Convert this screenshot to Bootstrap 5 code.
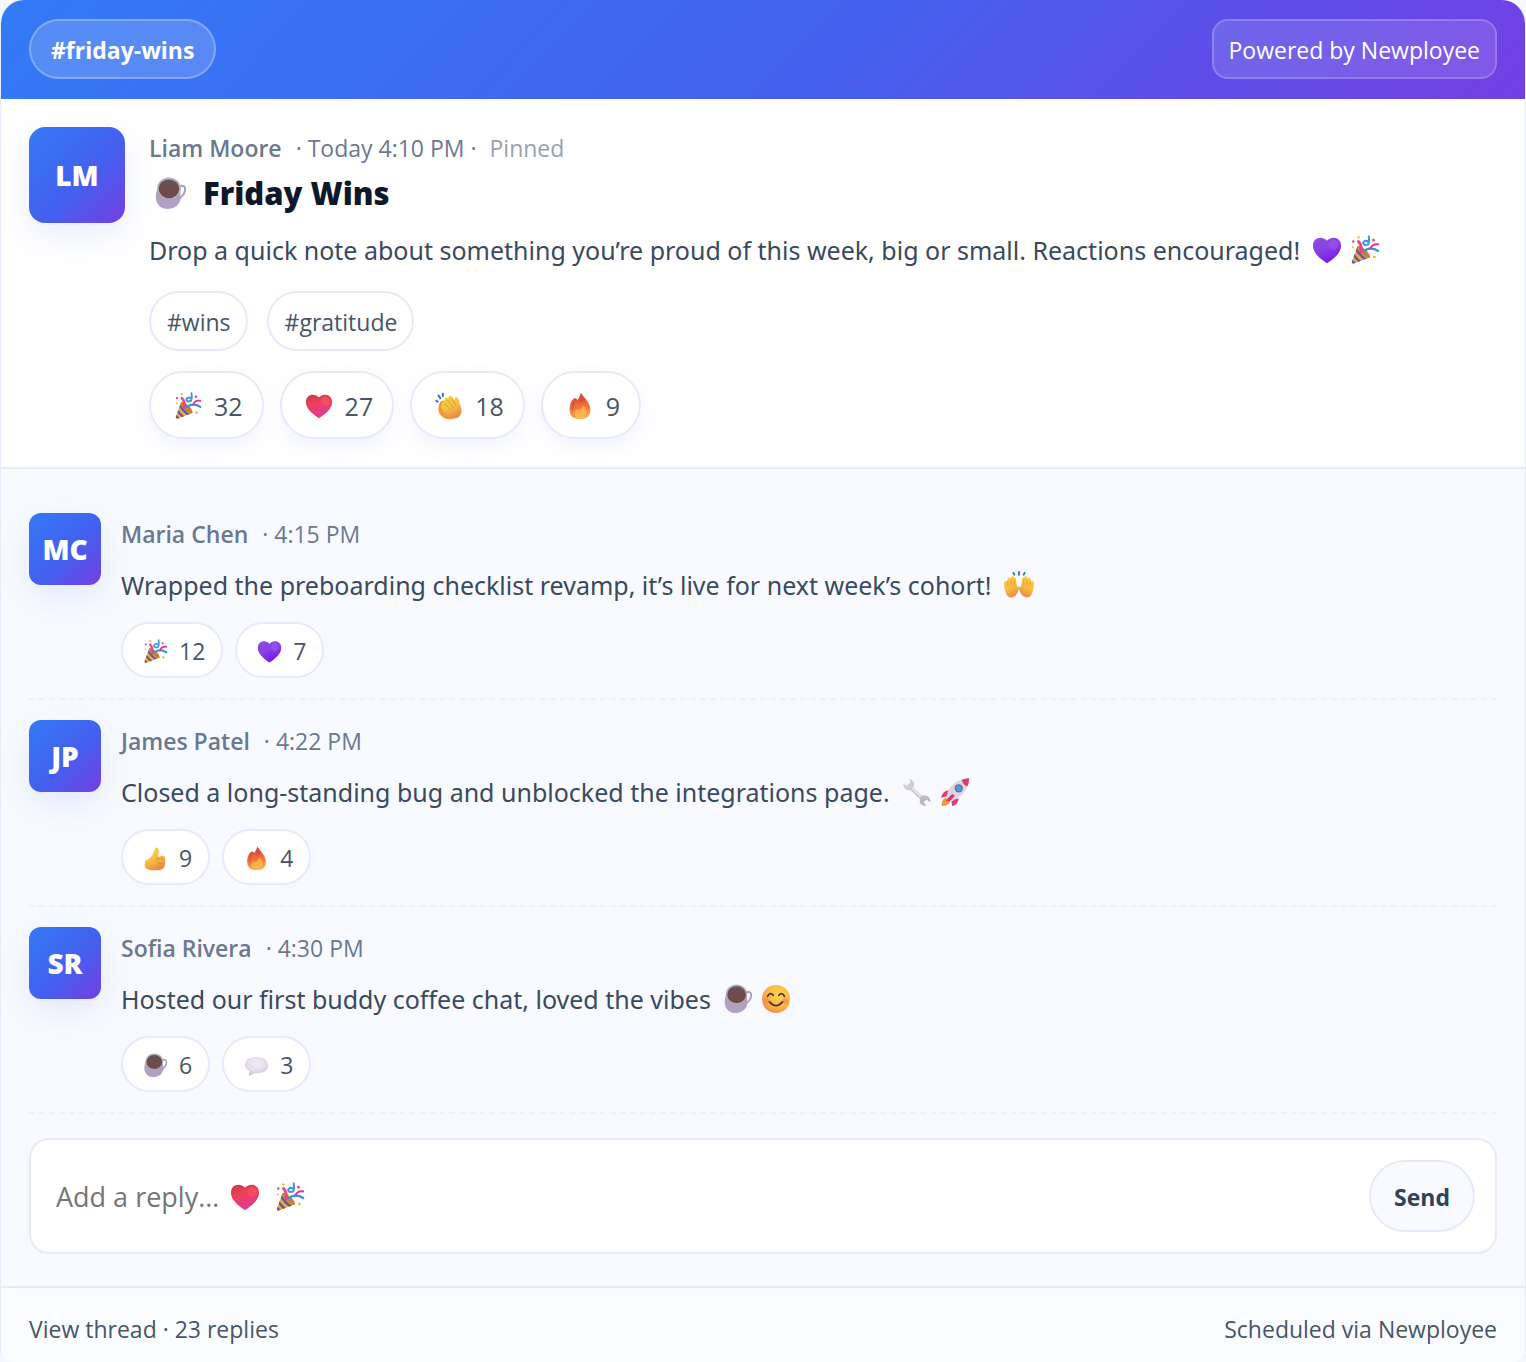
<!DOCTYPE html>
<html lang="en">
<head>
<meta charset="utf-8">
<meta name="viewport" content="width=device-width, initial-scale=1">
<title>#friday-wins</title>
<link href="https://cdn.jsdelivr.net/npm/bootstrap@5.3.0/dist/css/bootstrap.min.css" rel="stylesheet">
<style>
:root { --line: #e8eafc; --brand: linear-gradient(135deg, #347af6 0%, #4360ef 55%, #743fe3 100%); }
body { font-family: "Open Sans", "Noto Sans", sans-serif; background: #f6f8ff; color: #334155; font-size: 25px; line-height: 44px; }
.channel { border: 1px solid var(--line); border-width: 0 1px; border-radius: 24px 24px 12px 12px; background: #fff; overflow: hidden; }
.channel-top { background: var(--brand); padding: 19px 28px 20px; color: #fff; }
.channel-name, .powered { height: 60px; border: 2px solid rgba(255,255,255,.26); background: rgba(255,255,255,.16); color: #fff; font-size: 23px; }
.channel-name { font-weight: 700; padding: 2px 20px 0; border-radius: 30px; }
.powered { padding: 2px 15px 0; border-radius: 16px; background: rgba(255,255,255,.12); border-color: rgba(255,255,255,.2); }
.initials { flex: none; width: 72px; height: 72px; border-radius: 12px; background: var(--brand); color: #fff; font-weight: 800; font-size: 28px; box-shadow: 0 12px 32px rgba(67,97,238,.11); }
.initials-lg { width: 96px; height: 96px; border-radius: 16px; }
.post { padding: 28px; gap: 24px; border-bottom: 2px solid var(--line); }
.meta { font-size: 23px; line-height: 42px; padding-bottom: 2px; color: #6b7891; white-space: pre-wrap; }
.meta strong { font-weight: 600; margin-right: 14px; }
.pinned { color: #9aa1ad; margin-left: 13px; }
.post-title { font-size: 31px; line-height: 44px; font-weight: 800; color: #0f172a; padding-left: 5px; gap: 16px; }
.post-text { margin: 13px 0 19px; }
.post-text, .reply-text { font-family: "Noto Sans", "Open Sans", sans-serif; color: #3b4960; }
.glyph { width: 30px; height: 30px; flex: none; }
.glyph-title { width: 33px; height: 33px; }
.glyphs { gap: 8px; margin-left: 12px; }
.tags { gap: 19px; margin-bottom: 20px; }
.tag { height: 60px; border: 2px solid var(--line); border-radius: 30px; padding: 2px 15px 0 16px; font-size: 23px; color: #475569; text-decoration: none; }
.react { height: 68px; border: 2px solid var(--line); border-radius: 34px; background: #fff; color: #475569; font-size: 25px; padding: 1px 19px 0 23px; gap: 12px; box-shadow: 0 8px 20px rgba(67,97,238,.07); }
.react .glyph { width: 28px; height: 28px; }
.reply-reacts { gap: 12px; }
.thread .react { height: 56px; font-size: 23px; padding: 2px 16px 0 20px; gap: 11px; box-shadow: none; }
.thread .react .glyph { width: 25px; height: 25px; }
.thread { background: #f8faff; padding: 24px 28px 32px; border-bottom: 2px solid var(--line); }
.reply { padding: 20px 0; gap: 20px; border-bottom: 2px dashed #f0f2f9; }
.reply-text { margin: 6px 0 15px; }
.composer { margin-top: 24px; height: 116px; border: 2px solid var(--line); border-radius: 20px; background: #fff; padding: 0 20px 0 25px; }
.composer-field { font-size: 27px; color: #334155; border: 0; outline: 0; background: transparent; padding: 0; height: 72px; }
.composer-field::placeholder { color: #757575; opacity: 1; }
.composer-glyphs { position: absolute; left: 174px; top: 22px; gap: 15px; pointer-events: none; }
.composer-field:not(:placeholder-shown) + .composer-glyphs { display: none !important; }
.send { height: 72px; border: 2px solid var(--line); border-radius: 36px; background: #f8faff; color: #334155; font-size: 23px; font-weight: 700; padding: 2px 23px 0; }
.channel-foot { background: #fbfcff; padding: 19px 28px 10px; font-size: 23px; color: #475569; }
.channel-foot a { color: inherit; text-decoration: none; }
</style>
</head>
<body>
<svg width="0" height="0" class="position-absolute" aria-hidden="true">
  <defs>
    <linearGradient id="gRed" x1="0" y1="0" x2="0.3" y2="1"><stop offset="0" stop-color="#c8394c"/><stop offset=".45" stop-color="#ee4158"/><stop offset="1" stop-color="#e2389c"/></linearGradient>
    <linearGradient id="gPurple" x1="0" y1="0" x2="0.5" y2="1"><stop offset="0" stop-color="#8a50dc"/><stop offset=".5" stop-color="#8840e4"/><stop offset="1" stop-color="#7a18f0"/></linearGradient>
    <linearGradient id="gHand" x1="0" y1="0" x2=".4" y2="1"><stop offset="0" stop-color="#ffcf45"/><stop offset=".6" stop-color="#f9c03e"/><stop offset="1" stop-color="#ec8f4a"/></linearGradient>
    <linearGradient id="gFlame" x1=".5" y1="0" x2=".6" y2="1"><stop offset="0" stop-color="#d8443c"/><stop offset=".5" stop-color="#f0713a"/><stop offset="1" stop-color="#ffb348"/></linearGradient>
    <linearGradient id="gMug" x1="0" y1="0" x2="0" y2="1"><stop offset="0" stop-color="#a9a0b4"/><stop offset="1" stop-color="#b3a2c6"/></linearGradient>
    <radialGradient id="gFace" cx=".6" cy=".35" r=".75"><stop offset="0" stop-color="#ffd84e"/><stop offset=".6" stop-color="#fbb442"/><stop offset="1" stop-color="#ee8550"/></radialGradient>
    <radialGradient id="gBubble" cx=".5" cy=".35" r=".7"><stop offset="0" stop-color="#f1edf6"/><stop offset=".6" stop-color="#e2dcea"/><stop offset="1" stop-color="#c3b5d6"/></radialGradient>
    <linearGradient id="gSteel" x1="0" y1="0" x2="1" y2="1"><stop offset="0" stop-color="#d9d6e0"/><stop offset="1" stop-color="#b5afc0"/></linearGradient>
    <clipPath id="coneClip"><path d="M8 12 L21 24 L4 30.500 Q1.500 31 2 28.500Z"/></clipPath>
  </defs>
  <symbol id="party" viewBox="0 0 32 32">
    <path d="M8 12 L21 24 L4 30.500 Q1.500 31 2 28.500Z" fill="#f4a63c"/>
    <g clip-path="url(#coneClip)" stroke="#5b5aa8" stroke-width="2.600" fill="none"><path d="M5 12 Q9 22 20 28"/><path d="M2 18 Q6 26 14 31"/><path d="M0 25 Q3 29 8 33"/></g>
    <ellipse cx="14.500" cy="18" rx="9" ry="3" transform="rotate(43 14.500 18)" fill="#c98035"/>
    <path d="M12 18 Q13 11 9 7" stroke="#e8438f" stroke-width="3" fill="none" stroke-linecap="round"/>
    <path d="M15 17 Q22 12 30 17" stroke="#3f8fdc" stroke-width="2.600" fill="none" stroke-linecap="round"/>
    <path d="M20 1.500 Q21 7 19.500 10 Q15 12 14 8.500 Q15 5 19.500 7" stroke="#3f98d8" stroke-width="2.200" fill="none" stroke-linecap="round"/>
    <path d="M22 14 Q24 9 30 10" stroke="#d83a9a" stroke-width="2.200" fill="none" stroke-linecap="round"/>
    <g fill="#e8438f"><circle cx="3.500" cy="7" r="1.300"/><circle cx="25" cy="5.500" r="1.400"/></g>
    <g fill="#f6b53e"><circle cx="9" cy="2.500" r="1.300"/><circle cx="26" cy="23.500" r="1.500"/><circle cx="3" cy="13" r="1"/></g>
  </symbol>
  <symbol id="heart" viewBox="0 0 32 32"><path d="M16 30 C11 27 1 20 1 11.500 C1 6 4.500 3 9 3 C12 3 14.500 4.500 16 6 C17.500 4.500 20 3 23 3 C27.500 3 31 6 31 11.500 C31 20 21 27 16 30Z"/></symbol>
  <symbol id="heart-red" viewBox="0 0 32 32"><use href="#heart" fill="url(#gRed)"/><path d="M18 11 Q20 5 24 5 Q29 7 28 13 Q24 19 18 11Z" fill="#ff6a5e" opacity=".35"/></symbol>
  <symbol id="heart-purple" viewBox="0 0 32 32"><use href="#heart" fill="url(#gPurple)"/><path d="M17 11 Q19 5 24 5 Q29 7 27 14 Q22 19 17 11Z" fill="#a86af0" opacity=".4"/></symbol>
  <symbol id="clap" viewBox="0 0 32 32">
    <path d="M4 17 Q5 10 9 10 L22 10 L28 20 Q27 30 19 31 Q11 32 6 26 Q3 22 4 17Z" fill="#ee9a45"/>
    <path d="M8 15 Q7 12 10 11 L11 8 Q12 5 15 7 L16 5 Q18 3 21 7 L23 10 Q22 5 25 6 Q28 8 28 13 Q31 18 30 24 Q28 31 21 30 Q13 28 8 20 Q6 17 8 15Z" fill="url(#gHand)"/>
    <path d="M11 13 L18 21 M14 9 L21 18 M19 8 L24 15" stroke="#dc9137" stroke-width="1" fill="none" stroke-linecap="round"/>
    <path d="M1.500 10 L3 11 M4 4 L6 7 M9 2 L9 4.500" stroke="#376cc8" stroke-width="2.200" stroke-linecap="round"/>
  </symbol>
  <symbol id="flame" viewBox="0 0 32 32">
    <path d="M5 13 Q7 8 10 7 Q12 7 13 9 Q16 5 17 1 C20 6 28 12 28 20 Q28 31 16 31 Q4 31 4 20 Q4 16 5 13Z" fill="url(#gFlame)"/>
    <path d="M10 7 Q4 14 8 23 Q8 14 13 9 Q12 7 10 7Z" fill="#d75837"/>
    <path d="M17 1 Q20 5 22 9 Q18 12 14 12 Q17 6 17 1Z" fill="#d6483c" opacity=".7"/>
    <path d="M19 15 Q25 19 24 24 Q22 30 16 30 Q9 29 10 24 Q11 19 16 20 Q19 19 19 15Z" fill="#ffc255" opacity=".65"/>
  </symbol>
  <symbol id="coffee" viewBox="0 0 32 32">
    <path d="M24 9 Q31 7 30 13 Q29 19 24 20" fill="none" stroke="#a9a1b3" stroke-width="2"/>
    <path d="M4 9 Q1 17 2 22 Q4 31 14 31 Q24 30 26 21 L25 8Z" fill="url(#gMug)"/>
    <ellipse cx="14.500" cy="11" rx="11.500" ry="10.500" fill="#b5adbd"/><ellipse cx="14.500" cy="11.500" rx="10" ry="9" fill="#704b4b"/>
    <path d="M6 7 Q14 -1 23 7 Q15 4 6 7Z" fill="#5d565f"/>
  </symbol>
  <symbol id="hands" viewBox="0 0 32 32">
    <g id="palm"><path d="M3 27 Q0 21 0 14 Q1 10 3 12 L4 9 Q5 7 7 9 Q8 5 11 8 Q13 8 13 12 L14 18 Q16 16 16 20 Q14 28 9 29 Q5 30 3 27Z" fill="url(#gHand)"/><path d="M4 12 V17 M7.500 10 V16 M11 10 V17" stroke="#e2953a" stroke-width=".8"/></g>
    <use href="#palm" transform="translate(32 0) scale(-1 1)"/>
    <path d="M10 3 L11 5 M16 2 V5 M22 3 L21 5" stroke="#3b70cc" stroke-width="2" stroke-linecap="round"/>
  </symbol>
  <symbol id="wrench" viewBox="0 0 32 32">
    <path d="M8 2 Q13 3 13 8 L12 11 L21 20 Q26 18 29 22 Q31 25 30 27 L26 24 L23 27 L26 31 Q20 31 19 27 L19 23 L9 14 Q4 15 2 11 L1 7 L5 9 L9 6Z" fill="url(#gSteel)"/><path d="M11 12 L20 21" stroke="#edebf2" stroke-width="1.500"/>
  </symbol>
  <symbol id="rocket" viewBox="0 0 32 32">
    <path d="M6 22 Q1 25 2 31 Q8 31 11 26Z" fill="#f49a36"/><path d="M9 14 Q3 15 1 22 L10 20Z M20 23 Q19 30 13 31 L12 24Z" fill="#e53c73"/>
    <path d="M7 21 Q10 4 30 1 Q31 18 12 26Z" fill="#dcd5e3"/><path d="M23 3 L31 1 Q31 7 29 10 Q25 9 23 3Z" fill="#e23a5e"/>
    <circle cx="20" cy="12" r="4.400" fill="#64739c"/><circle cx="20" cy="12" r="2.800" fill="#4e9cec"/><path d="M6 25 L13 18 L16 20 L10 26Z" fill="#d8376c"/>
  </symbol>
  <symbol id="thumb" viewBox="0 0 32 32">
    <path d="M3 19 Q12 15 14 7 Q15 1 18 2 Q22 4 19 14 L25 12 Q29 13 28 17 Q30 20 28 22 Q29 25 27 27 Q26 31 19 31 L10 31 Q2 30 2 24Z" fill="url(#gHand)"/>
    <path d="M19 17 Q22 15 28 17 M19 22 L28 22 M20 27 L27 27 M19 14 Q17 17 18 19" stroke="#d98d32" stroke-width="1.200" fill="none"/>
  </symbol>
  <symbol id="smile" viewBox="0 0 32 32">
    <circle cx="16" cy="16" r="15" fill="url(#gFace)"/><path d="M7 13 Q10 8 13 12 M19 12 Q22 8 25 13 M9 19 Q16 27 23 19" stroke="#54333c" stroke-width="2" fill="none" stroke-linecap="round"/>
    <g fill="#f0764f" opacity=".45"><circle cx="6" cy="18" r="3"/><circle cx="26" cy="18" r="3"/></g>
  </symbol>
  <symbol id="bubble" viewBox="0 0 32 32"><path d="M7 23 L6 29 L14 26 Q31 26 31 15 Q30 5 16 5 Q1 5 1 15 Q1 20 7 23Z" fill="url(#gBubble)"/></symbol>
</svg>

<main class="channel d-flex flex-column min-vh-100">
  <header class="channel-top d-flex justify-content-between align-items-center">
    <span class="channel-name d-flex align-items-center">#friday-wins</span>
    <span class="powered d-flex align-items-center">Powered by Newployee</span>
  </header>

  <article class="post d-flex align-items-start">
    <div class="initials initials-lg d-flex align-items-center justify-content-center">LM</div>
    <div class="flex-grow-1">
      <div class="meta"><strong>Liam Moore</strong>· Today 4:10 PM ·<span class="pinned">Pinned</span></div>
      <h1 class="post-title d-flex align-items-center mb-0"><svg class="glyph glyph-title"><use href="#coffee"/></svg>Friday Wins</h1>
      <p class="post-text d-flex align-items-center">Drop a quick note about something you’re proud of this week, big or small. Reactions encouraged!<span class="glyphs d-flex"><svg class="glyph"><use href="#heart-purple"/></svg><svg class="glyph"><use href="#party"/></svg></span></p>
      <div class="tags d-flex"><a class="tag d-flex align-items-center" href="#wins">#wins</a><a class="tag d-flex align-items-center" href="#gratitude">#gratitude</a></div>
      <div class="d-flex gap-3">
        <button type="button" class="react d-flex align-items-center"><svg class="glyph"><use href="#party"/></svg>32</button>
        <button type="button" class="react d-flex align-items-center"><svg class="glyph"><use href="#heart-red"/></svg>27</button>
        <button type="button" class="react d-flex align-items-center"><svg class="glyph"><use href="#clap"/></svg>18</button>
        <button type="button" class="react d-flex align-items-center"><svg class="glyph"><use href="#flame"/></svg>9</button>
      </div>
    </div>
  </article>

  <section class="thread" id="thread">
    <article class="reply d-flex align-items-start">
      <div class="initials d-flex align-items-center justify-content-center">MC</div>
      <div class="flex-grow-1">
        <div class="meta"><strong>Maria Chen</strong>· 4:15 PM</div>
        <p class="reply-text d-flex align-items-center">Wrapped the preboarding checklist revamp, it’s live for next week’s cohort!<span class="glyphs d-flex"><svg class="glyph"><use href="#hands"/></svg></span></p>
        <div class="reply-reacts d-flex">
          <button type="button" class="react d-flex align-items-center"><svg class="glyph"><use href="#party"/></svg>12</button>
          <button type="button" class="react d-flex align-items-center"><svg class="glyph"><use href="#heart-purple"/></svg>7</button>
        </div>
      </div>
    </article>
    <article class="reply d-flex align-items-start">
      <div class="initials d-flex align-items-center justify-content-center">JP</div>
      <div class="flex-grow-1">
        <div class="meta"><strong>James Patel</strong>· 4:22 PM</div>
        <p class="reply-text d-flex align-items-center">Closed a long-standing bug and unblocked the integrations page.<span class="glyphs d-flex"><svg class="glyph"><use href="#wrench"/></svg><svg class="glyph"><use href="#rocket"/></svg></span></p>
        <div class="reply-reacts d-flex">
          <button type="button" class="react d-flex align-items-center"><svg class="glyph"><use href="#thumb"/></svg>9</button>
          <button type="button" class="react d-flex align-items-center"><svg class="glyph"><use href="#flame"/></svg>4</button>
        </div>
      </div>
    </article>
    <article class="reply d-flex align-items-start">
      <div class="initials d-flex align-items-center justify-content-center">SR</div>
      <div class="flex-grow-1">
        <div class="meta"><strong>Sofia Rivera</strong>· 4:30 PM</div>
        <p class="reply-text d-flex align-items-center">Hosted our first buddy coffee chat, loved the vibes<span class="glyphs d-flex"><svg class="glyph"><use href="#coffee"/></svg><svg class="glyph"><use href="#smile"/></svg></span></p>
        <div class="reply-reacts d-flex">
          <button type="button" class="react d-flex align-items-center"><svg class="glyph"><use href="#coffee"/></svg>6</button>
          <button type="button" class="react d-flex align-items-center"><svg class="glyph"><use href="#bubble"/></svg>3</button>
        </div>
      </div>
    </article>
    <form class="composer d-flex align-items-center">
      <div class="position-relative flex-grow-1">
        <input type="text" class="composer-field w-100 d-block" placeholder="Add a reply…" aria-label="Add a reply">
        <span class="composer-glyphs d-flex"><svg class="glyph"><use href="#heart-red"/></svg><svg class="glyph"><use href="#party"/></svg></span>
      </div>
      <button type="button" class="send">Send</button>
    </form>
  </section>

  <footer class="channel-foot d-flex justify-content-between flex-grow-1">
    <a href="#thread">View thread · 23 replies</a>
    <span>Scheduled via Newployee</span>
  </footer>
</main>
<script src="https://cdn.jsdelivr.net/npm/bootstrap@5.3.0/dist/js/bootstrap.bundle.min.js"></script>
</body>
</html>
